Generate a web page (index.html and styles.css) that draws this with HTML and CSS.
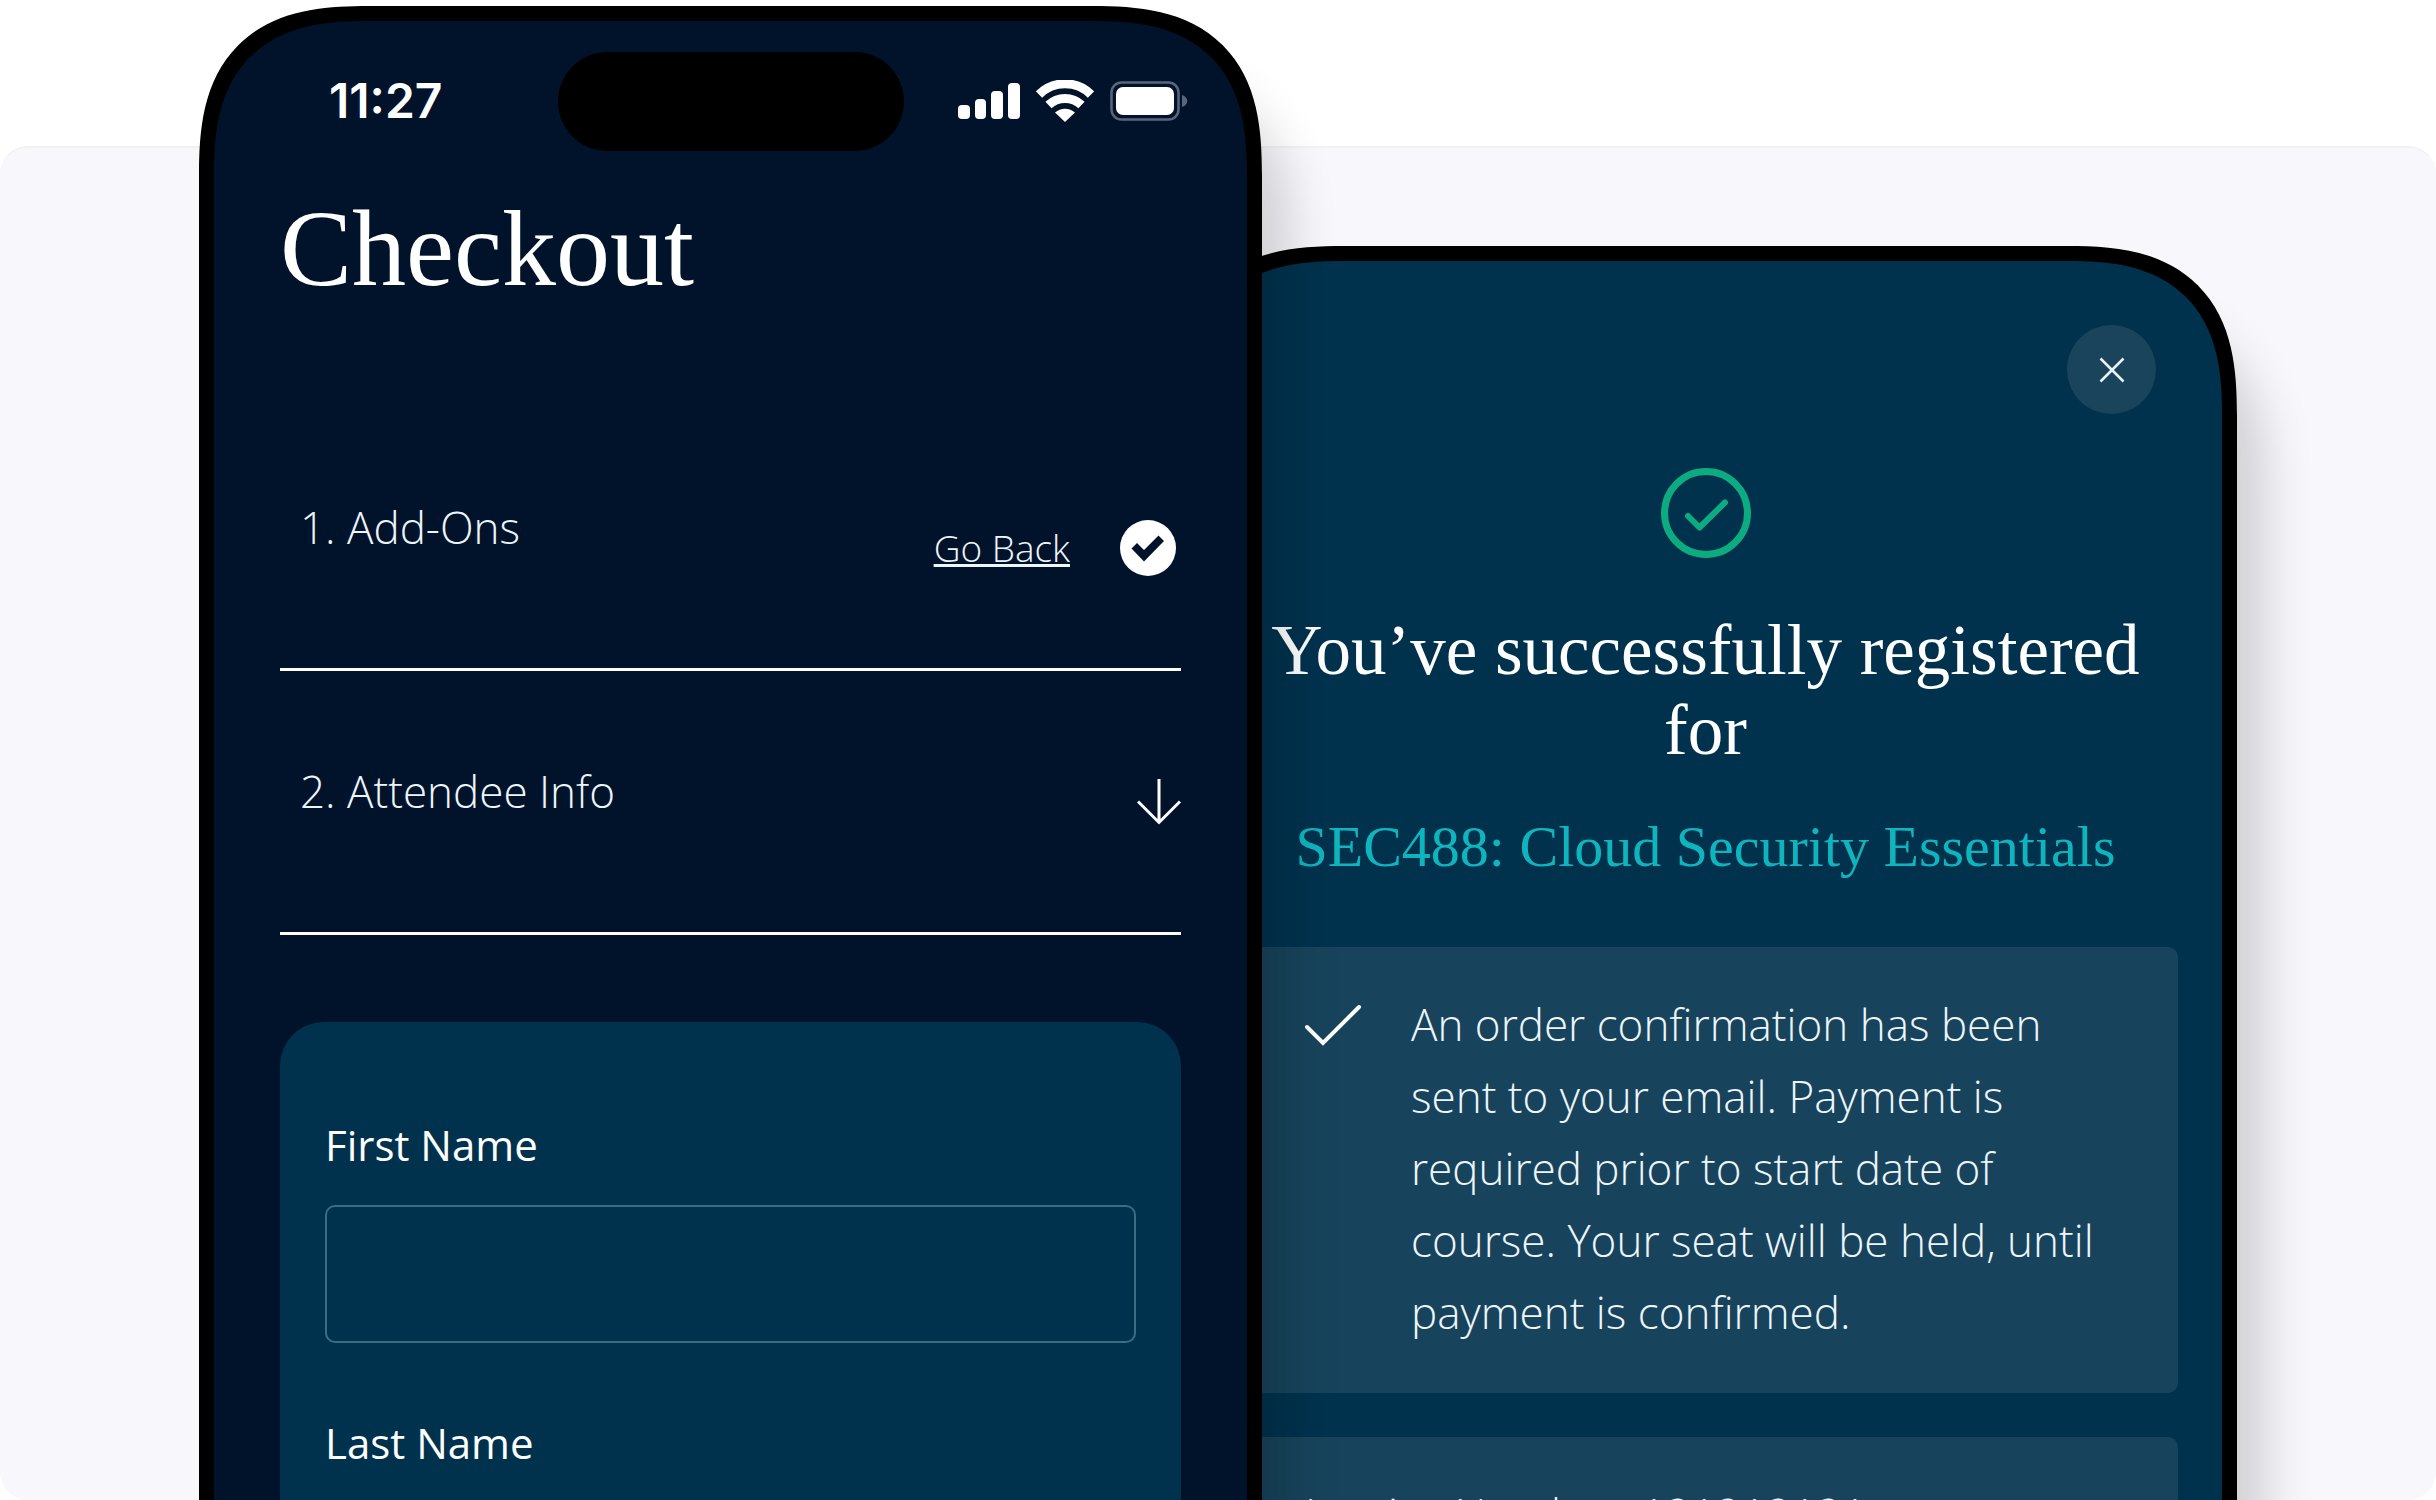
FILE: index.html
```html
<!DOCTYPE html>
<html lang="en">
<head>
<meta charset="utf-8">
<meta name="viewport" content="width=device-width, initial-scale=1">
<title>Checkout</title>
<link rel="stylesheet" href="styles.css">
</head>
<body>
<main class="showcase">
  <section class="phone phone-checkout" aria-label="Checkout screen">
    <div class="status-bar">
      <span class="status-time">11:27</span>
      <span class="island"></span>
      <span class="status-icons">
        <svg width="62" height="36" viewBox="0 0 62 36" fill="#fff" aria-hidden="true"><rect y="22" width="12" height="14" rx="4"/><rect x="17" y="16" width="11" height="20" rx="4"/><rect x="33" y="8" width="12" height="28" rx="4"/><rect x="50" width="12" height="36" rx="4"/></svg>
        <svg width="58" height="42" viewBox="0 0 58 42" aria-hidden="true"><g fill="none" stroke="#fff" stroke-width="9"><path d="M3 14.500a37 37 0 0 1 52 0"/><path d="M12.500 25a24 24 0 0 1 33 0"/></g><path d="M19 32.500a15 15 0 0 1 20 0L29 42z" fill="#fff"/></svg>
        <svg width="78" height="40" viewBox="0 0 78 40" aria-hidden="true"><rect x="1.500" y="1.500" width="67" height="37" rx="10" fill="none" stroke="#5a6579" stroke-width="2.500"/><rect x="6" y="6" width="58" height="28" rx="7" fill="#fff"/><path d="M72 14c7 2 7 10 0 12z" fill="#5a6579"/></svg>
      </span>
    </div>
    <h1 class="title">Checkout</h1>
    <ol class="steps">
      <li class="step">
        <h2 class="step-name">1. Add-Ons</h2>
        <div class="step-side">
          <a class="go-back" href="#add-ons">Go Back</a>
          <svg width="56" height="56" viewBox="0 0 56 56" aria-hidden="true"><circle cx="28" cy="28" r="28" fill="#fff"/><path d="M11.500 28.500l5.500-5.500 7 7L38.500 15.500l5.500 5.500L24 41.500z" fill="#00132b"/></svg>
        </div>
      </li>
      <li class="step">
        <h2 class="step-name">2. Attendee Info</h2>
        <svg class="step-arrow" width="44" height="46" viewBox="0 0 44 46" fill="none" stroke="#fff" stroke-width="3" aria-hidden="true"><path d="M22 0v43M1 22.500l21 21 21-21"/></svg>
      </li>
    </ol>
    <form class="attendee">
      <div class="field">
        <label for="first-name">First Name</label>
        <input id="first-name" type="text">
      </div>
      <div class="field">
        <label for="last-name">Last Name</label>
        <input id="last-name" type="text">
      </div>
    </form>
  </section>

  <section class="phone phone-confirm" aria-label="Registration confirmation">
    <button class="close" type="button" aria-label="Close">
      <svg width="26" height="26" viewBox="0 0 26 26" stroke="#e8f3fa" stroke-width="2.500" aria-hidden="true"><path d="M1.500 1.500l23 23M24.500 1.500l-23 23"/></svg>
    </button>
    <svg class="success" width="90" height="90" viewBox="0 0 90 90" fill="none" stroke="#0cab80" aria-hidden="true"><circle cx="45" cy="45" r="41.500" stroke-width="7"/><path d="M27 48l11.500 11.500L64 34.500" stroke-width="6" stroke-linecap="round" stroke-linejoin="round"/></svg>
    <h2 class="headline">You’ve successfully registered for</h2>
    <p class="course">SEC488: Cloud Security Essentials</p>
    <div class="notes">
      <div class="note">
        <svg class="note-tick" width="56" height="42" viewBox="0 0 56 42" fill="none" stroke="#fff" stroke-width="4" stroke-linecap="round" aria-hidden="true"><path d="M2 23l16 16L54 3"/></svg>
        <p class="note-text">An order confirmation has been sent to your email. Payment is required prior to start date of course. Your seat will be held, until payment is confirmed.</p>
      </div>
      <div class="note">
        <p class="note-text">Invoice Number: 121212121</p>
      </div>
    </div>
  </section>
</main>
</body>
</html>
```
FILE: styles.css
```css
* { box-sizing: border-box; }

body {
  margin: 0;
  background: #fff;
  font-family: "Open Sans", "Noto Sans", sans-serif;
  font-weight: 300;
  color: #eef5fa;
}

h1, h2, p, ol { margin: 0; padding: 0; font-weight: inherit; }
svg { display: block; flex: none; }

.showcase {
  position: relative;
  display: flex;
  justify-content: center;
  height: 100vh;
  overflow: hidden;
  isolation: isolate;
}

/* tinted panel behind both phones */
.showcase::before {
  content: "";
  position: absolute;
  z-index: -2;
  inset: 146px 0 0;
  border-top: 2px solid #f1f1f3;
  border-radius: 28px;
  background: #f8f8fc;
}

.phone {
  flex: none;
  width: 1063px;
  border: 15px solid #000;
  border-bottom: 0;
  border-radius: 140px 140px 0 0;
  box-shadow: 48px 56px 50px -20px rgba(0, 0, 0, 0.16);
}

/* smoother, device-like corners where the browser can draw them */
@supports (corner-shape: superellipse(1.4)) {
  .phone {
    border-radius: 170px 170px 0 0;
    corner-shape: superellipse(1.4);
  }
}

.phone-checkout {
  height: 1640px;
  margin-top: 6px;
  padding: 0 66px;
  background: #00132b;
}

.status-bar {
  display: grid;
  grid-template-columns: 1fr 346px 1fr;
  align-items: center;
  height: 160px;
  margin: 0 -7px;
}

.status-time {
  padding-left: 56px;
  font: 600 48px/48px Inter, sans-serif;
  color: #fff;
}

.island {
  height: 99px;
  border-radius: 50px;
  background: #000;
}

.status-icons {
  display: flex;
  align-items: center;
  justify-content: flex-end;
  gap: 16px;
}

.title {
  margin-top: 8px;
  font: 400 108px/120px "Liberation Serif", serif;
  color: #fff;
}

.steps { padding-top: 98px; list-style: none; }

.step {
  display: flex;
  justify-content: space-between;
  height: 264px;
  padding: 90px 0 0 20px;
  border-bottom: 3px solid #fff;
}

.step-name { font-size: 44px; line-height: 60px; }

.step-side {
  display: flex;
  align-items: center;
  gap: 50px;
  height: 56px;
  margin: 23px 5px 0 0;
}

.go-back { font-size: 37px; line-height: 48px; color: inherit; }
.step-arrow { margin-top: 18px; }

.attendee {
  display: flex;
  flex-direction: column;
  gap: 70px;
  margin-top: 87px;
  padding: 93px 45px;
  border-radius: 44px;
  background: #00324e;
}

.field { display: flex; flex-direction: column; gap: 30px; }
.field label { font-size: 42px; line-height: 60px; font-weight: 400; color: #fff; }

.field input {
  width: 100%;
  height: 138px;
  padding: 0 24px;
  border: 2px solid #3c6c83;
  border-radius: 10px;
  background: transparent;
  font: inherit;
  font-size: 42px;
  color: #fff;
}

.phone-confirm {
  z-index: -1;
  display: flex;
  flex-direction: column;
  align-items: center;
  height: 1400px;
  margin: 246px 0 0 -88px;
  padding: 64px 44px 0;
  background: #00324e;
}

.close {
  display: grid;
  place-items: center;
  align-self: flex-end;
  width: 89px;
  height: 89px;
  margin-right: 22px;
  padding: 0;
  border: 0;
  border-radius: 50%;
  background: #19445c;
}

.success { margin-top: 54px; }

.headline {
  margin-top: 52px;
  font: 400 71px/80px "Liberation Serif", serif;
  text-align: center;
  color: #fff;
}

.course {
  margin-top: 41px;
  font: 400 58px/72px "Liberation Serif", serif;
  color: #0fb5bd;
}

.notes {
  display: flex;
  flex-direction: column;
  align-self: stretch;
  gap: 44px;
  margin-top: 64px;
}

.note {
  display: flex;
  gap: 50px;
  padding: 41px 72px 45px;
  border-radius: 10px;
  background: #17445c;
}

.note-tick { margin-top: 16px; }
.note-text { font-size: 44px; line-height: 72px; }
```
